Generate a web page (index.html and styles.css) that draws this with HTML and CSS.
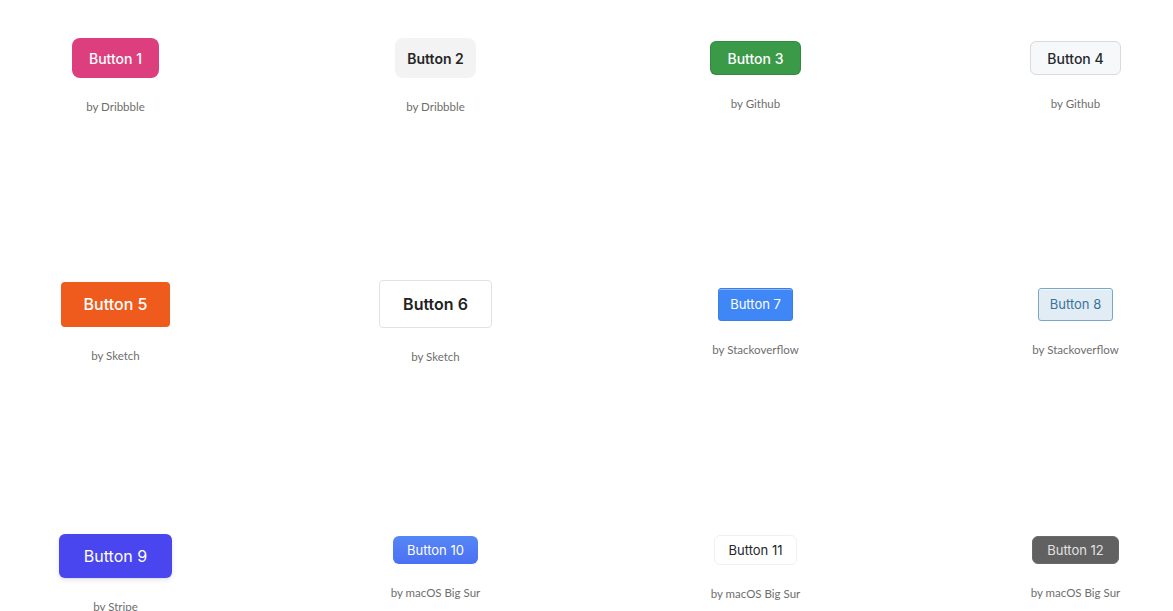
FILE: index.html
```html
<!DOCTYPE html>
<html>
<head>
    <title>Buttons</title>
    <link rel="stylesheet" href="styles.css">
</head>
<body>
    <main class="grid">
        <div class="cell">
            <button class="btn btn-dribbble">Button 1</button>
            <p class="by">by Dribbble</p>
        </div>
        <div class="cell">
            <button class="btn btn-dribbble-soft">Button 2</button>
            <p class="by">by Dribbble</p>
        </div>
        <div class="cell">
            <button class="btn btn-github">Button 3</button>
            <p class="by">by Github</p>
        </div>
        <div class="cell">
            <button class="btn btn-github-light">Button 4</button>
            <p class="by">by Github</p>
        </div>

        <div class="cell">
            <button class="btn btn-sketch">Button 5</button>
            <p class="by">by Sketch</p>
        </div>
        <div class="cell">
            <button class="btn btn-sketch-light">Button 6</button>
            <p class="by">by Sketch</p>
        </div>
        <div class="cell">
            <button class="btn btn-so">Button 7</button>
            <p class="by">by Stackoverflow</p>
        </div>
        <div class="cell">
            <button class="btn btn-so-light">Button 8</button>
            <p class="by">by Stackoverflow</p>
        </div>

        <div class="cell">
            <button class="btn btn-stripe">Button 9</button>
            <p class="by">by Stripe</p>
        </div>
        <div class="cell">
            <button class="btn btn-mac">Button 10</button>
            <p class="by">by macOS Big Sur</p>
        </div>
        <div class="cell">
            <button class="btn btn-mac-light">Button 11</button>
            <p class="by">by macOS Big Sur</p>
        </div>
        <div class="cell">
            <button class="btn btn-mac-dark">Button 12</button>
            <p class="by">by macOS Big Sur</p>
        </div>
    </main>
</body>
</html>
```

FILE: styles.css
```css
body {
    margin: 0;
    padding: 0;
    background-color: #ffffff;
    font-family: 'Inter', 'Roboto', sans-serif;
}

.grid {
    display: grid;
    grid-template-columns: repeat(4, 215px);
    grid-auto-rows: 152px;
    column-gap: 105px;
    row-gap: 94px;
    padding: 0 8px;
}

.cell {
    display: flex;
    flex-direction: column;
    align-items: center;
    justify-content: center;
}

.by {
    margin: 22px 0 0;
    font-family: 'Lato', sans-serif;
    font-size: 11.5px;
    line-height: 14px;
    color: #6e6e6e;
}

.btn {
    display: inline-flex;
    align-items: center;
    justify-content: center;
    box-sizing: border-box;
    margin: 0;
    border: 0;
    font-family: 'Inter', 'Roboto', sans-serif;
    font-size: 14px;
    white-space: nowrap;
    cursor: pointer;
}

/* dribbble */
.btn-dribbble {
    height: 40px;
    padding: 0 17px;
    border-radius: 8px;
    background-color: #dd3f7e;
    color: #ffffff;
    font-weight: 500;
}

.btn-dribbble-soft {
    height: 40px;
    padding: 0 12px;
    border-radius: 8px;
    background-color: #f3f3f4;
    color: #262626;
    font-weight: 600;
}

/* github */
.btn-github {
    height: 34px;
    padding: 0 16px;
    border: 1px solid rgba(27, 31, 35, 0.15);
    border-radius: 6px;
    background-color: #3a9a48;
    color: #ffffff;
    font-weight: 500;
}

.btn-github-light {
    height: 34px;
    padding: 0 16px;
    border: 1px solid #d8dadd;
    border-radius: 6px;
    background-color: #f7f8fa;
    color: #24292e;
    font-weight: 500;
}

/* sketch */
.btn-sketch {
    height: 45px;
    padding: 0 23px;
    border-radius: 4px;
    background-color: #ef5a1d;
    color: #ffffff;
    font-size: 16px;
    font-weight: 500;
}

.btn-sketch-light {
    height: 48px;
    padding: 0 23px;
    border: 1px solid #e2e2e2;
    border-radius: 4px;
    background-color: #ffffff;
    color: #222222;
    font-size: 16px;
    font-weight: 600;
}

/* stackoverflow */
.btn-so {
    height: 33px;
    padding: 0 11px;
    border: 1px solid #3b7fe6;
    border-radius: 3px;
    background-color: #3f87f7;
    color: #ffffff;
    font-size: 13px;
    box-shadow: inset 0 1px 0 0 rgba(255, 255, 255, 0.4);
}

.btn-so-light {
    height: 33px;
    padding: 0 11px;
    border: 1px solid #7aa7c7;
    border-radius: 3px;
    background-color: #e1ecf4;
    color: #39739d;
    font-size: 13px;
    box-shadow: inset 0 1px 0 0 rgba(255, 255, 255, 0.7);
}

/* stripe */
.btn-stripe {
    height: 44px;
    margin-top: 12px;
    padding: 0 25px;
    border-radius: 6px;
    background-color: #4a46ef;
    color: #ffffff;
    font-size: 16px;
    box-shadow: 0 2px 5px rgba(50, 50, 93, 0.12), 0 1px 1px rgba(0, 0, 0, 0.06);
}

/* macOS */
.btn-mac {
    height: 28px;
    padding: 0 14px;
    border-radius: 6px;
    background: linear-gradient(to bottom, #5687f6, #4a70f3);
    color: #ffffff;
    font-size: 13px;
}

.btn-mac-light {
    height: 30px;
    padding: 0 14px;
    border: 1px solid #f0f0f0;
    border-radius: 6px;
    background-color: #ffffff;
    color: #262626;
    font-size: 13px;
}

.btn-mac-dark {
    height: 28px;
    padding: 0 14px;
    border: 1px solid #6a6a6a;
    border-radius: 6px;
    background-color: #616161;
    color: #e2e2e2;
    font-size: 13px;
}
```
